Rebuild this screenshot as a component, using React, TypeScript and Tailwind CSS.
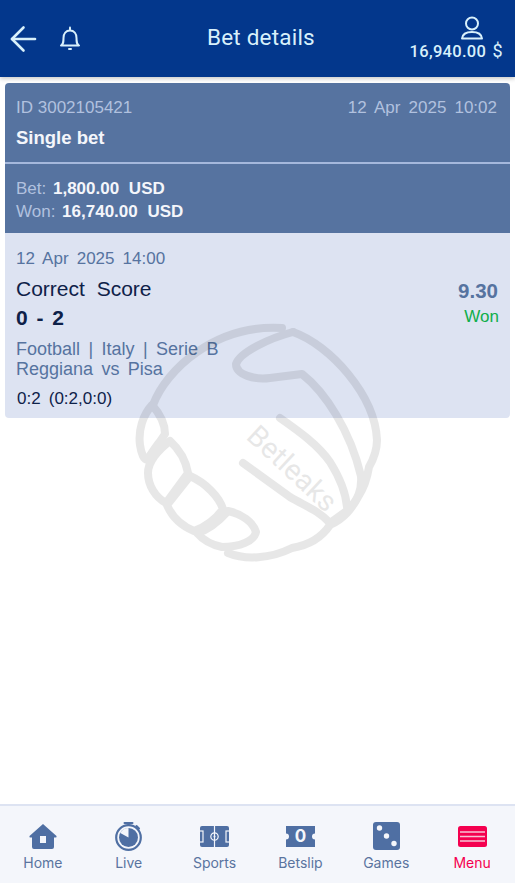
import React from "react";

const Watermark = () => (
  <svg
    className="absolute left-[125px] top-[310px] pointer-events-none"
    width="265"
    height="260"
    viewBox="125 310 265 260"
    fill="none"
  >
    <g opacity="0.09" stroke="#000" strokeWidth="8" strokeLinecap="round" strokeLinejoin="round">
      <path d="M153 405 C166 370 215 324 282 328" />
      <path d="M293 332 C270 338 240 352 236 364 C236 375 255 380 270 378 L302 374 C325 392 350 430 361 476 C362 490 358 500 348 510 L330 523 C318 510 305 506 290 497 L243 463" />
      <path d="M280 418 C300 432 318 445 330 462 C340 478 346 495 347 507" />
      <path d="M293 332 C330 345 375 395 377 440 C377 450 373 460 369 467 C367 480 364 488 358 497 C352 508 345 518 330 525 C322 537 310 545 292 548 C270 559 245 560 228 553" />
      <path d="M152 405 C161 415 165 425 165 434 C160 442 153 450 148 459 C144 462 141 452 140 445 C138 430 143 415 152 405 Z" />
      <path d="M170 441 C180 450 186 462 188 473 L166 503 C155 497 148 485 148 473 C148 462 158 450 170 441 Z" />
      <path d="M190 476 C206 483 219 497 223 509 C216 519 205 527 194 531 C182 526 172 517 167 505 Z" />
      <path d="M228 511 C242 514 253 522 256 532 C254 541 240 547 222 547 C212 545 203 540 197 533 C208 530 220 520 228 511 Z" />
      <text
        x="0"
        y="0"
        transform="translate(245 438) rotate(43)"
        fill="#000"
        stroke="none"
        fontSize="29"
        style={{ fontFamily: "Roboto, sans-serif" }}
      >
        Betleaks
      </text>
    </g>
  </svg>
);

const NavItem = ({ label, active, children }: { label: string; active?: boolean; children: React.ReactNode }) => (
  <div className="flex-1 flex flex-col items-center">
    <div className="h-[34px] w-[44px] flex items-center justify-center">{children}</div>
    <span className={`mt-px text-[14px] leading-[18px] ${active ? "text-[#f4004f]" : "text-[#5a749f]"}`}>{label}</span>
  </div>
);

export default function App() {
  return (
    <div className="relative h-[883px] w-[515px] overflow-hidden bg-white flex flex-col font-['Liberation_Sans',sans-serif]">
      <header className="h-[77px] shrink-0 bg-[#03378c] flex items-center relative shadow-[0_2px_4px_rgba(0,0,0,0.2)] z-10 font-['Roboto',sans-serif]">
        <svg className="ml-[10px]" width="28" height="28" viewBox="0 0 28 28" fill="none" stroke="#d8f0fb" strokeWidth="2.6" strokeLinecap="round" strokeLinejoin="round">
          <path d="M2 14 H25" />
          <path d="M13.5 2.5 L2 14 L13.5 25.5" />
        </svg>
        <svg className="ml-[21px]" width="22" height="26" viewBox="0 0 22 26" fill="none" stroke="#d8f0fb" strokeWidth="2" strokeLinecap="round" strokeLinejoin="round">
          <path d="M2 19.5 C4.5 18 4.5 16 4.5 12 C4.5 7.5 7 4.5 11 4.5 C15 4.5 17.5 7.5 17.5 12 C17.5 16 17.5 18 20 19.5 Z" />
          <path d="M11 1.5 V3.5" />
          <path d="M10 23 H12" />
        </svg>
        <h1 className="absolute left-[207px] top-[23px] text-[22.5px] leading-[28px] text-[#d8f0fb] tracking-[0.2px]">Bet details</h1>
        <div className="ml-auto mr-[12px] flex flex-col items-end mt-[1px]">
          <svg className="mr-[19px]" width="24" height="24" viewBox="0 0 24 24" fill="none" stroke="#d8f0fb" strokeWidth="2" strokeLinejoin="round">
            <circle cx="12" cy="7.5" r="6" />
            <path d="M2 22.5 C2.5 18 6.5 16 12 16 C17.5 16 21.5 18 22 22.5 Z" />
          </svg>
          <div className="text-[16.5px] leading-[20px] text-[#d8f0fb] font-medium tracking-[0.3px] mt-[1px] whitespace-nowrap">
            16,940.00 <span className="font-normal text-[18px] ml-[2px]">$</span>
          </div>
        </div>
      </header>

      <main className="mt-[6px] mx-[5px] rounded-[4px] overflow-hidden">
        <div className="bg-[#5673a0] h-[79px] px-[11px] pt-[14px]">
          <div className="flex justify-between text-[17px] leading-[22px] text-[#b1c1df]">
            <span>ID 3002105421</span>
            <span className="mr-[2px] [word-spacing:3.4px]">12 Apr 2025 10:02</span>
          </div>
          <div className="mt-[8px] text-[18.5px] leading-[22px] text-[#f4f6fb] font-bold">Single bet</div>
        </div>
        <div className="h-[2px] bg-[#a5b8dc]" />
        <div className="bg-[#5673a0] h-[69px] px-[11px] pt-[13px] text-[17px] leading-[23px] text-[#b1c1df] [word-spacing:2px]">
          <div>Bet: <span className="font-bold text-[#f4f6fb] [word-spacing:5px]">1,800.00 USD</span></div>
          <div>Won: <span className="font-bold text-[#f4f6fb] [word-spacing:5px]">16,740.00 USD</span></div>
        </div>
        <div className="bg-[#dde3f2] h-[185px] px-[11px] pt-[15px] relative">
          <div className="text-[17px] leading-[22px] text-[#5673a0] [word-spacing:3.4px]">12 Apr 2025 14:00</div>
          <div className="flex justify-between mt-[6px]">
            <div className="text-[21px] leading-[26px] text-[#0e2149] [word-spacing:6px]">Correct Score</div>
            <div className="text-[20.5px] leading-[26px] font-bold text-[#5673a0] mt-[2px] mr-[1px]">9.30</div>
          </div>
          <div className="flex justify-between">
            <div className="text-[21px] leading-[26px] font-bold text-[#0e2149] [word-spacing:3px] mt-[1px]">0 - 2</div>
            <div className="text-[17px] leading-[22px] text-[#0fae4b] mt-[2px]">Won</div>
          </div>
          <div className="mt-[8px] text-[18px] leading-[20px] text-[#5673a0] [word-spacing:3.4px]">Football | Italy | Serie B</div>
          <div className="text-[18px] leading-[20px] text-[#5673a0] [word-spacing:3.4px]">Reggiana vs Pisa</div>
          <div className="mt-[9px] ml-[1px] text-[17px] leading-[22px] text-[#0e2149] [word-spacing:3.4px]">0:2 (0:2,0:0)</div>
        </div>
      </main>

      <div className="flex-1" />

      <nav className="h-[79px] shrink-0 bg-[#f4f6fb] border-t-2 border-[#dde3f2] flex pt-[13px] font-['Inter',sans-serif]">
        <NavItem label="Home">
          <svg width="28" height="25" viewBox="0 0 28 25" fill="#4f6fa3">
            <path fillRule="evenodd" d="M14 0 L27.5 12 Q28 13.5 26.5 13.5 H25 V23 Q25 25 23 25 H5 Q3 25 3 23 V13.5 H1.5 Q0 13.5 0.5 12 Z M11 12 V19 H17 V12 Z" />
          </svg>
        </NavItem>
        <NavItem label="Live">
          <svg width="27" height="29" viewBox="0 0 27 29" fill="none">
            <path d="M9.5 1 H17.5" stroke="#4f6fa3" strokeWidth="2" strokeLinecap="round" />
            <path d="M13.5 1 V4" stroke="#4f6fa3" strokeWidth="2" />
            <path d="M21.5 4 L24 6.5" stroke="#4f6fa3" strokeWidth="2" strokeLinecap="round" />
            <circle cx="13.5" cy="15.5" r="12.3" stroke="#4f6fa3" strokeWidth="2.2" />
            <circle cx="13.5" cy="15.5" r="9.5" fill="#4f6fa3" />
            <path d="M13.5 15.5 L5.3 11 A9.5 9.5 0 0 1 13.5 6 Z" fill="#f4f6fb" />
          </svg>
        </NavItem>
        <NavItem label="Sports">
          <svg width="29" height="21" viewBox="0 0 29 21">
            <rect width="29" height="21" rx="2" fill="#4f6fa3" />
            <g fill="none" stroke="#f4f6fb" strokeWidth="1.2">
              <path d="M14.5 0 V21" />
              <circle cx="14.5" cy="10.5" r="3.7" />
              <rect x="-1" y="5" width="4" height="11" />
              <rect x="26" y="5" width="4" height="11" />
            </g>
            <circle cx="14.5" cy="10.5" r="1" fill="#f4f6fb" />
          </svg>
        </NavItem>
        <NavItem label="Betslip">
          <div className="relative w-[29px] h-[21px]">
            <svg width="29" height="21" viewBox="0 0 29 21" className="absolute inset-0">
              <path d="M0 0 H29 V7.5 A3 3 0 0 0 29 13.5 V21 H0 V13.5 A3 3 0 0 0 0 7.5 Z" fill="#4f6fa3" />
            </svg>
            <span className="absolute inset-0 flex items-center justify-center text-[17px] leading-[21px] font-bold text-[#f4f6fb]">0</span>
          </div>
        </NavItem>
        <NavItem label="Games">
          <svg width="27" height="28" viewBox="0 0 27 28">
            <rect width="27" height="28" rx="3" fill="#4f6fa3" />
            <circle cx="6.5" cy="6" r="2.7" fill="#f4f6fb" />
            <circle cx="13.5" cy="14" r="2.7" fill="#f4f6fb" />
            <circle cx="21" cy="21.5" r="2.7" fill="#f4f6fb" />
          </svg>
        </NavItem>
        <NavItem label="Menu" active>
          <svg width="29" height="21" viewBox="0 0 29 21">
            <rect width="29" height="21" rx="2.5" fill="#f4004f" />
            <path d="M2 6 H27 M2 10.5 H27 M2 15 H27" stroke="#f6c2d5" strokeWidth="1.4" />
          </svg>
        </NavItem>
      </nav>

      <Watermark />
    </div>
  );
}
